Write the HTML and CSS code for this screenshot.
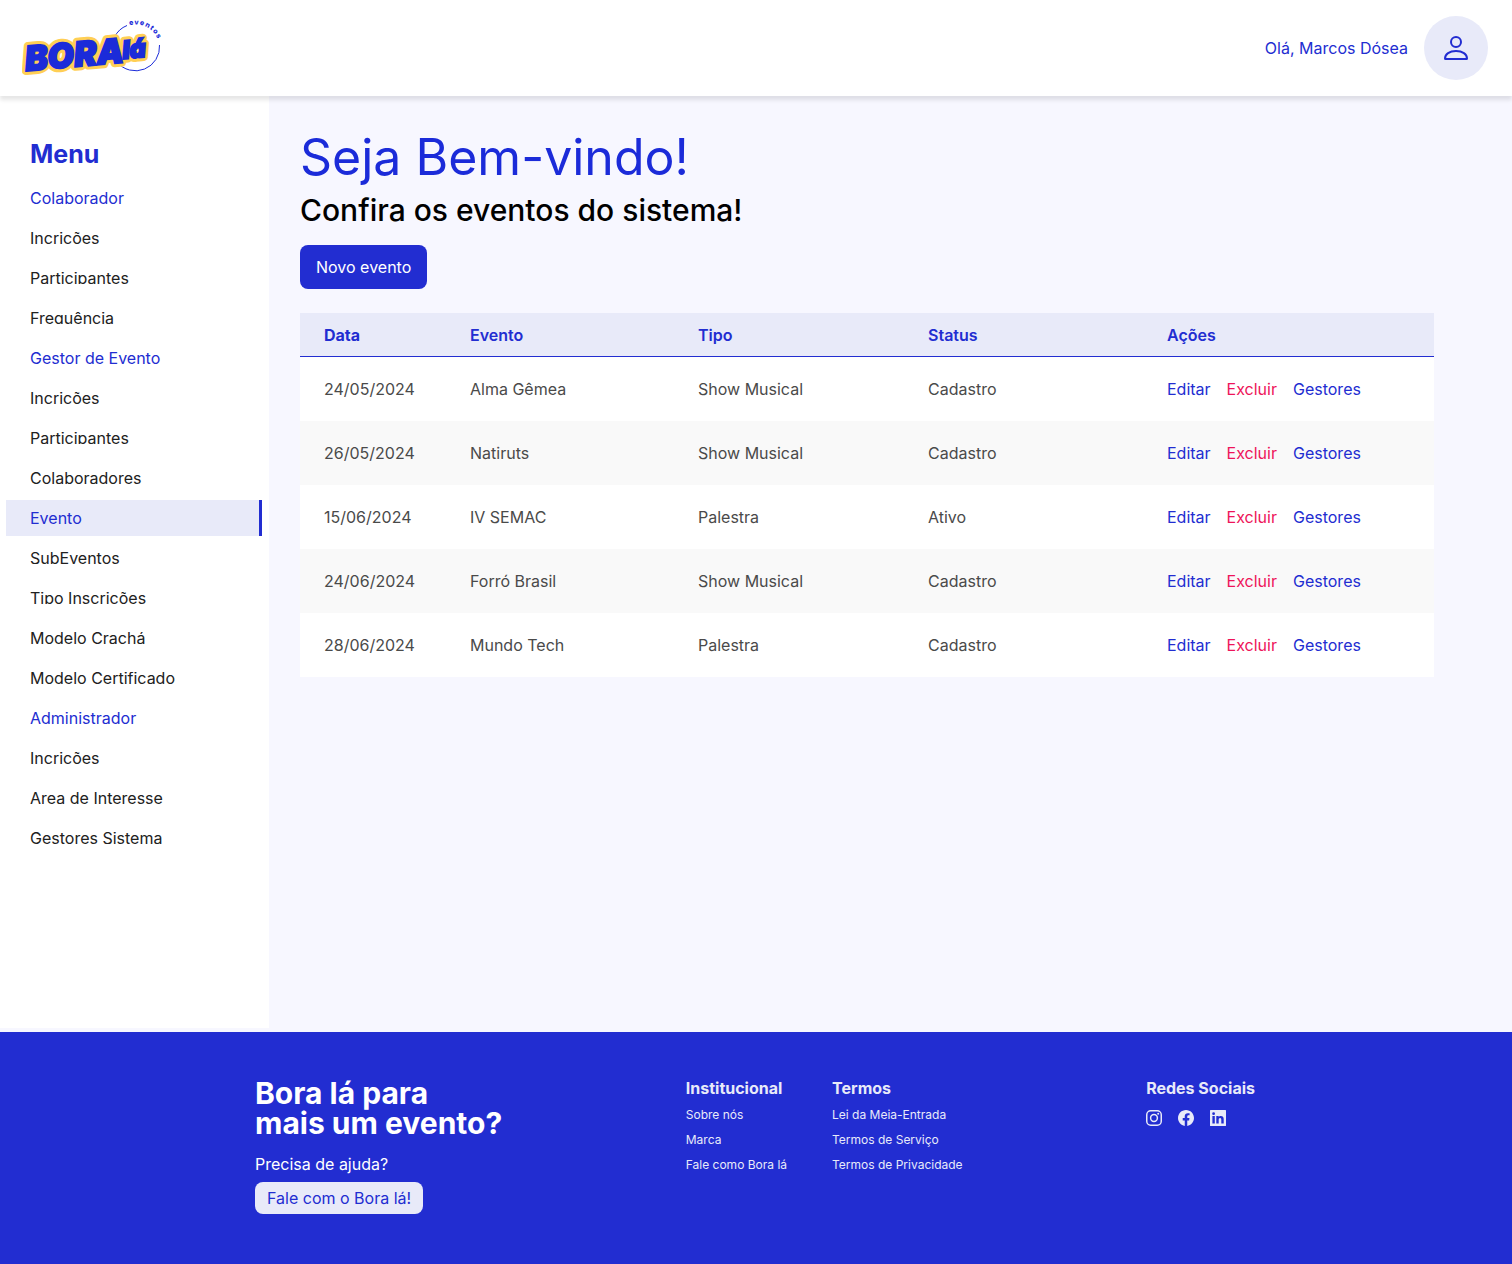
FILE: index.html
```html
<!DOCTYPE html>
<html lang="pt-BR">
<head>
<meta charset="utf-8">
<meta name="viewport" content="width=device-width, initial-scale=1">
<title>Bora lá Eventos</title>
<link rel="stylesheet" href="styles.css">
</head>
<body>
<header class="topbar">
  <a class="logo" href="#" aria-label="Bora lá eventos">
    <svg width="140" height="60" viewBox="22 18 140 60">
      <defs><path id="ring-text" d="M112.500 48a23.500 23.500 0 0 1 47 0"/></defs>
      <path class="logo-ring" d="M114.500 37A24 24 0 0 1 127 25.500M159.500 45A24 24 0 0 1 117 62"/>
      <text class="logo-tag"><textPath href="#ring-text" startOffset="30">eventos</textPath></text>
      <g class="logo-outline">
        <text class="logo-bora" transform="translate(26 71) rotate(-5)">BORA</text>
        <text class="logo-la" transform="translate(123 59) rotate(-5)">lá</text>
      </g>
      <g class="logo-fill" aria-hidden="true">
        <text class="logo-bora" transform="translate(26 71) rotate(-5)">BORA</text>
        <text class="logo-la" transform="translate(123 59) rotate(-5)">lá</text>
      </g>
    </svg>
  </a>
  <div class="user">
    <span>Olá, Marcos Dósea</span>
    <button class="avatar" type="button" aria-label="Perfil">
      <svg width="24" height="24" viewBox="0 0 24 24" fill="none" stroke="currentColor" stroke-width="2" stroke-linejoin="round"><circle cx="12" cy="6" r="5"/><path d="M1 22.500C1 18 5.500 15 12 15s11 3 11 7.500c0 .4-.2.500-.5.500h-21c-.3 0-.5-.1-.5-.5z"/></svg>
    </button>
  </div>
</header>

<div class="layout">
  <nav class="sidebar" aria-label="Menu">
    <h2 class="menu-title">Menu</h2>
    <ul class="menu">
      <li class="menu-item menu-group"><span>Colaborador</span></li>
      <li class="menu-item"><a href="#">Incrições</a></li>
      <li class="menu-item"><a href="#">Participantes</a></li>
      <li class="menu-item"><a href="#">Frequência</a></li>
      <li class="menu-item menu-group"><span>Gestor de Evento</span></li>
      <li class="menu-item"><a href="#">Incrições</a></li>
      <li class="menu-item"><a href="#">Participantes</a></li>
      <li class="menu-item"><a href="#">Colaboradores</a></li>
      <li class="menu-item menu-active"><a href="#" aria-current="page">Evento</a></li>
      <li class="menu-item"><a href="#">SubEventos</a></li>
      <li class="menu-item"><a href="#">Tipo Inscrições</a></li>
      <li class="menu-item"><a href="#">Modelo Crachá</a></li>
      <li class="menu-item"><a href="#">Modelo Certificado</a></li>
      <li class="menu-item menu-group"><span>Administrador</span></li>
      <li class="menu-item"><a href="#">Incrições</a></li>
      <li class="menu-item"><a href="#">Area de Interesse</a></li>
      <li class="menu-item"><a href="#">Gestores Sistema</a></li>
    </ul>
  </nav>

  <main class="content">
    <h1 class="title">Seja Bem-vindo!</h1>
    <p class="subtitle">Confira os eventos do sistema!</p>
    <button class="btn-primary" type="button">Novo evento</button>
    <table class="events">
      <colgroup><col class="col-date"><col class="col-event"><col class="col-type"><col class="col-status"><col></colgroup>
      <thead>
        <tr><th scope="col" class="sorted">Data</th><th scope="col">Evento</th><th scope="col">Tipo</th><th scope="col">Status</th><th scope="col">Ações</th></tr>
      </thead>
      <tbody>
        <tr><td>24/05/2024</td><td>Alma Gêmea</td><td>Show Musical</td><td>Cadastro</td><td><div class="actions"><a href="#">Editar</a><a class="danger" href="#">Excluir</a><a href="#">Gestores</a></div></td></tr>
        <tr><td>26/05/2024</td><td>Natiruts</td><td>Show Musical</td><td>Cadastro</td><td><div class="actions"><a href="#">Editar</a><a class="danger" href="#">Excluir</a><a href="#">Gestores</a></div></td></tr>
        <tr><td>15/06/2024</td><td>IV SEMAC</td><td>Palestra</td><td>Ativo</td><td><div class="actions"><a href="#">Editar</a><a class="danger" href="#">Excluir</a><a href="#">Gestores</a></div></td></tr>
        <tr><td>24/06/2024</td><td>Forró Brasil</td><td>Show Musical</td><td>Cadastro</td><td><div class="actions"><a href="#">Editar</a><a class="danger" href="#">Excluir</a><a href="#">Gestores</a></div></td></tr>
        <tr><td>28/06/2024</td><td>Mundo Tech</td><td>Palestra</td><td>Cadastro</td><td><div class="actions"><a href="#">Editar</a><a class="danger" href="#">Excluir</a><a href="#">Gestores</a></div></td></tr>
      </tbody>
    </table>
  </main>
</div>

<footer class="footer">
  <div class="footer-inner">
    <section>
      <h2 class="footer-title">Bora lá para<br>mais um evento?</h2>
      <p class="footer-help">Precisa de ajuda?</p>
      <button class="btn-light" type="button">Fale com o Bora lá!</button>
    </section>
    <div class="footer-columns">
      <section>
        <h3 class="footer-heading">Institucional</h3>
        <ul class="footer-links">
          <li><a href="#">Sobre nós</a></li>
          <li><a href="#">Marca</a></li>
          <li><a href="#">Fale como Bora lá</a></li>
        </ul>
      </section>
      <section>
        <h3 class="footer-heading">Termos</h3>
        <ul class="footer-links">
          <li><a href="#">Lei da Meia-Entrada</a></li>
          <li><a href="#">Termos de Serviço</a></li>
          <li><a href="#">Termos de Privacidade</a></li>
        </ul>
      </section>
    </div>
    <section>
      <h3 class="footer-heading">Redes Sociais</h3>
      <div class="social">
        <a href="#" aria-label="Instagram"><svg width="16" height="16" viewBox="0 0 16 16" fill="none" stroke="currentColor" stroke-width="1.500"><rect x=".75" y=".75" width="14.500" height="14.500" rx="4"/><circle cx="8" cy="8" r="3.400"/><circle cx="12.200" cy="3.800" r="1" fill="currentColor" stroke="none"/></svg></a>
        <a href="#" aria-label="Facebook"><svg width="16" height="16" viewBox="0 0 16 16" fill="currentColor"><path d="M16 8.050C16 3.600 12.420 0 8 0S0 3.600 0 8.050c0 4.020 2.930 7.350 6.750 7.950v-5.620H4.720V8.050h2.030V6.270c0-2.020 1.200-3.130 3.020-3.130.88 0 1.800.16 1.800.16v1.980h-1.010c-1 0-1.310.62-1.310 1.260v1.510h2.220l-.36 2.330H9.250V16C13.070 15.400 16 12.070 16 8.050z"/></svg></a>
        <a href="#" aria-label="LinkedIn"><svg width="16" height="16" viewBox="0 0 16 16" fill="currentColor"><path fill-rule="evenodd" d="M.6 0h14.800c.3 0 .6.300.6.600v14.800c0 .3-.3.600-.6.600H.6c-.3 0-.6-.3-.6-.6V.6C0 .3.300 0 .6 0zM2.400 6.100v7.500h2.400V6.100zM3.600 2.300a1.400 1.400 0 1 0 0 2.800 1.400 1.400 0 0 0 0-2.800zM6.300 6.100v7.500h2.400V9.900c0-1 .3-1.900 1.400-1.900s1.200 1 1.200 2v3.600h2.400V9.500c0-2.200-.6-3.600-2.900-3.600-1.100 0-1.800.5-2.100 1.200V6.100z"/></svg></a>
      </div>
    </section>
  </div>
</footer>
</body>
</html>
```
FILE: styles.css
```css
:root {
  --blue: #222dd1;
  --blue-bright: #1b2bd9;
  --tint: #e8eaf9;
  --page: #f7f7ff;
}

* { box-sizing: border-box; }

body {
  display: flex;
  flex-direction: column;
  min-height: 100vh;
  margin: 0;
  background: var(--page);
  color: #212121;
  font: 16px/20px Inter, sans-serif;
}

h1, h2, h3, p, ul { margin: 0; padding: 0; }
ul { list-style: none; }
a { color: inherit; text-decoration: none; }
button { border: 0; font: inherit; cursor: pointer; }
svg { display: block; }

.topbar {
  position: relative;
  z-index: 1;
  display: flex;
  align-items: center;
  justify-content: space-between;
  padding: 16px 24px 16px 22px;
  background: #fff;
  box-shadow: 0 4px 4px rgba(0, 0, 0, 0.1);
}

.logo-ring { fill: none; stroke: var(--blue-bright); }
.logo-tag { fill: var(--blue-bright); font-size: 7px; font-weight: 800; letter-spacing: 1px; }
.logo-bora { font-size: 34px; font-weight: 900; font-style: italic; }
.logo-la { font-size: 25px; font-weight: 900; font-style: italic; }
.logo-outline { fill: #ffcf55; stroke: #ffcf55; stroke-width: 8; stroke-linejoin: round; }
.logo-fill { fill: var(--blue-bright); stroke: var(--blue-bright); stroke-width: 2; }

.user {
  display: flex;
  align-items: center;
  gap: 16px;
  color: var(--blue);
}

.avatar {
  display: grid;
  place-items: center;
  width: 64px;
  height: 64px;
  padding: 0;
  border-radius: 50%;
  background: var(--tint);
  color: var(--blue);
}

.layout {
  display: flex;
  flex: 1;
}

.sidebar {
  flex: none;
  width: 269px;
  margin-bottom: 4px;
  padding: 42px 7px 32px 6px;
  background: #fff;
}

.menu-title {
  padding: 0 24px;
  color: var(--blue);
  font-size: 25px;
  font-weight: 700;
  line-height: 32px;
}

.menu {
  display: flex;
  flex-direction: column;
  gap: 4px;
  padding-top: 10px;
}

.menu-item { padding: 12px 24px; }

.menu-item > * {
  display: block;
  overflow: hidden;
  line-height: 12px;
}

.menu-group { color: var(--blue); }

.menu-active {
  border-right: 3px solid var(--blue);
  background: var(--tint);
  color: var(--blue);
}

.content {
  flex: 1;
  min-width: 0;
  padding: 31px 78px 32px 31px;
}

.title {
  color: var(--blue-bright);
  font-size: 50px;
  font-weight: 400;
  line-height: 60px;
}

.subtitle {
  padding: 5px 0 17px;
  color: #000;
  font-size: 30px;
  font-weight: 500;
  line-height: 36px;
}

.btn-primary {
  display: block;
  padding: 12px 16px;
  border-radius: 8px;
  background: var(--blue);
  color: #fff;
}

.events {
  width: 100%;
  margin-top: 24px;
  border-spacing: 0;
  table-layout: fixed;
  text-align: left;
}

.col-date { width: 146px; }
.col-event { width: 228px; }
.col-type { width: 230px; }
.col-status { width: 239px; }

.events th {
  height: 44px;
  padding: 0 24px;
  border-bottom: 1px solid var(--blue);
  background: var(--tint);
  color: var(--blue);
  font-weight: 600;
}

.events .sorted { font-weight: 700; }

.events td {
  height: 64px;
  padding: 0 24px;
  color: #4a4a4a;
}

.events tbody tr { background: #fff; }
.events tbody tr:nth-child(even) { background: #f9f9f9; }

.actions {
  display: flex;
  gap: 16px;
  color: var(--blue);
}

.danger { color: #ee1459; }

.footer {
  padding: 46px 26px 50px 24px;
  background: var(--blue);
  color: var(--tint);
}

.footer-inner {
  display: flex;
  justify-content: space-between;
  max-width: 1000px;
  margin: 0 auto;
}

.footer-title {
  color: #fff;
  font-size: 30px;
  font-weight: 700;
  line-height: 30px;
}

.footer-help { padding: 16px 0 8px; color: #fff; }

.btn-light {
  padding: 6px 12px;
  border-radius: 8px;
  background: var(--tint);
  color: var(--blue);
}

.footer-columns {
  display: flex;
  gap: 45px;
}

.footer-heading {
  font-size: 16px;
  font-weight: 700;
  line-height: 20px;
}

.footer-links {
  padding-top: 4px;
  font-size: 12px;
  line-height: 25px;
}

.social {
  display: flex;
  gap: 16px;
  padding-top: 12px;
}
```
